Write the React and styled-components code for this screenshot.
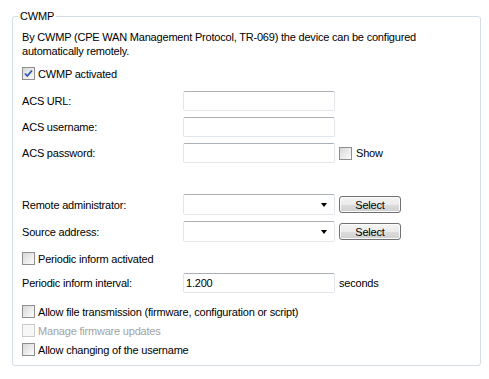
import styled, { createGlobalStyle } from "styled-components";

const GlobalStyle = createGlobalStyle`
  body {
    margin: 0;
    background: #ffffff;
    font-family: "Liberation Sans", Arial, sans-serif;
    font-size: 11px;
    letter-spacing: -0.2px;
    color: #000000;
  }
`;

const Page = styled.div`
  width: 489px;
  height: 379px;
  padding: 10px 8px 0 12px;
  box-sizing: border-box;
`;

const Frame = styled.fieldset`
  margin: 0;
  padding: 0 9px 9px 9px;
  border: 1px solid #d5dde5;
  border-radius: 3px;
  display: flex;
  flex-direction: column;
`;

const Legend = styled.legend`
  padding: 0 2px;
  margin-left: -4px;
  line-height: 13px;
`;

const Description = styled.p`
  margin: 7px 0 0;
  line-height: 14px;
`;

const Row = styled.div`
  margin-top: ${(p) => p.$gap}px;
  display: grid;
  grid-template-columns: 157px 152px auto;
  column-gap: 4px;
  align-items: center;
`;

const CheckRow = styled.label`
  margin-top: ${(p) => p.$gap}px;
  display: flex;
  align-items: center;
  gap: 3px;
  height: 13px;
  color: ${(p) => (p.$disabled ? "#a2a2a2" : "#000000")};
`;

const Label = styled.span`
  white-space: nowrap;
`;

const TextBox = styled.div`
  height: 20px;
  box-sizing: border-box;
  border: 1px solid #e2e6eb;
  border-top-color: #abb0b7;
  border-radius: 2px;
  background: #ffffff;
  padding: 0 2px;
  display: flex;
  align-items: center;
`;

const Combo = styled(TextBox)`
  height: 21px;
  justify-content: flex-end;
  padding-right: 7px;
`;

const Arrow = styled.span`
  width: 0;
  height: 0;
  border-left: 3.5px solid transparent;
  border-right: 3.5px solid transparent;
  border-top: 4px solid #000000;
`;

const Button = styled.button`
  width: 62px;
  height: 17px;
  padding: 0;
  font: inherit;
  letter-spacing: inherit;
  color: #000000;
  border: 1px solid #707070;
  border-radius: 3px;
  background: linear-gradient(#f4f4f4 0%, #ebebeb 50%, #dddddd 51%, #cfcfcf 100%);
  box-shadow: inset 0 0 0 1px #fbfbfb;
`;

const Inline = styled.div`
  display: flex;
  align-items: center;
  gap: 4px;
`;

const Box = styled.span`
  width: 13px;
  height: 13px;
  box-sizing: border-box;
  flex: none;
  border: 1px solid ${(p) => (p.$disabled ? "#c9cbcd" : "#8f8f8f")};
  background: ${(p) =>
    p.$disabled
      ? "#f7f7f7"
      : "linear-gradient(135deg, #d8d8d8 0%, #eeeeee 60%, #fbfbfb 100%)"};
  display: flex;
  align-items: center;
  justify-content: center;
`;

const Check = () => (
  <svg width="9" height="9" viewBox="0 0 9 9">
    <path d="M1 4.5 L3.3 7 L8 1.5" fill="none" stroke="#2a57b8" strokeWidth="1.8" />
  </svg>
);

const CheckBox = ({ checked, disabled, children, gap }) => (
  <CheckRow $gap={gap} $disabled={disabled}>
    <Box $disabled={disabled}>{checked && <Check />}</Box>
    {children}
  </CheckRow>
);

const App = () => {
  return (
    <Page>
      <GlobalStyle />
      <Frame>
        <Legend>CWMP</Legend>
        <Description>
          By CWMP (CPE WAN Management Protocol, TR-069) the device can be configured
          <br />
          automatically remotely.
        </Description>
        <CheckBox gap={9} checked>
          CWMP activated
        </CheckBox>

        <Row $gap={11}>
          <Label>ACS URL:</Label>
          <TextBox />
        </Row>
        <Row $gap={6}>
          <Label>ACS username:</Label>
          <TextBox />
        </Row>
        <Row $gap={6}>
          <Label>ACS password:</Label>
          <TextBox />
          <Inline>
            <Box />
            <span>Show</span>
          </Inline>
        </Row>

        <Row $gap={31}>
          <Label>Remote administrator:</Label>
          <Combo>
            <Arrow />
          </Combo>
          <Button>Select</Button>
        </Row>
        <Row $gap={6}>
          <Label>Source address:</Label>
          <Combo>
            <Arrow />
          </Combo>
          <Button>Select</Button>
        </Row>

        <CheckBox gap={10}>Periodic inform activated</CheckBox>
        <Row $gap={8}>
          <Label>Periodic inform interval:</Label>
          <TextBox>1.200</TextBox>
          <span>seconds</span>
        </Row>

        <CheckBox gap={12}>Allow file transmission (firmware, configuration or script)</CheckBox>
        <CheckBox gap={6} disabled>
          Manage firmware updates
        </CheckBox>
        <CheckBox gap={6}>Allow changing of the username</CheckBox>
      </Frame>
    </Page>
  );
};

export default App;
